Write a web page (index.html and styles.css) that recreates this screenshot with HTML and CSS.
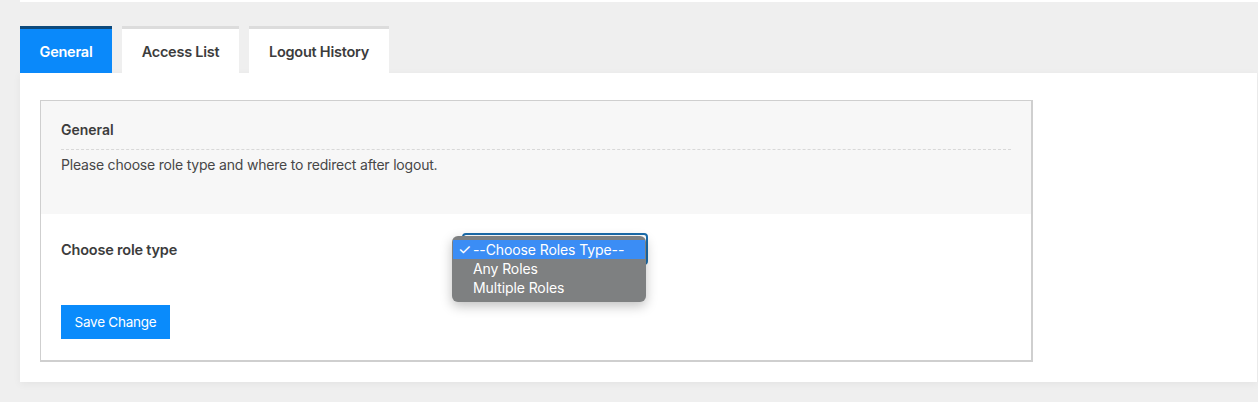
FILE: index.html
```html
<!DOCTYPE html>
<html>
<head>
<meta charset="utf-8">
<link rel="stylesheet" href="styles.css">
</head>
<body>
<div class="page">
  <div class="topstrip"></div>
  <div class="tabs">
    <div class="tab active">General</div>
    <div class="tab tab-access">Access List</div>
    <div class="tab tab-history">Logout History</div>
  </div>
  <div class="panel">
    <div class="box">
      <div class="box-head">
        <div class="box-title">General</div>
        <div class="box-desc">Please choose role type and where to redirect after logout.</div>
      </div>
      <div class="box-body">
        <div class="row">
          <div class="label">Choose role type</div>
          <div class="field">
            <div class="select"></div>
            <div class="menu">
              <div class="opt sel"><span class="check">✓</span>--Choose Roles Type--</div>
              <div class="opt">Any Roles</div>
              <div class="opt">Multiple Roles</div>
            </div>
          </div>
        </div>
        <button class="btn">Save Change</button>
      </div>
    </div>
  </div>
</div>
</body>
</html>
```
FILE: styles.css
```css
html, body { margin: 0; padding: 0; }
body {
  background: #efefef;
  font-family: Inter, "Noto Sans", "Liberation Sans", sans-serif;
  color: #3c3c3c;
  width: 1258px;
  height: 402px;
  overflow: hidden;
}
.page { padding-left: 20px; }
.topstrip { height: 2px; background: #fff; }
.tabs { display: flex; gap: 10px; margin-top: 24px; align-items: flex-end; }
.tab {
  height: 44px;
  border-top: 3px solid #dcdcdc;
  background: #fff;
  font-size: 14.5px;
  font-weight: 600;
  letter-spacing: -0.25px;
  color: #3c3c3c;
  display: flex;
  align-items: center;
  justify-content: center;
  box-sizing: content-box;
}
.tab.active { width: 92px; background: #0a89fa; color: #fff; border-top-color: #0d4a7c; }
.tab-access { width: 117px; }
.tab-history { width: 140px; }
.panel {
  width: 1197px;
  background: #fff;
  padding: 27px 20px 20px 20px;
  box-shadow: 0 2px 8px rgba(0,0,0,0.05);
}
.box {
  width: 990px;
  border-style: solid;
  border-width: 1px 2px 2px 1px;
  border-color: #cfcfcf;
}
.box-head {
  background: #f7f7f7;
  padding: 20px 20px 0 20px;
  height: 93px;
}
.box-title {
  font-size: 14px;
  font-weight: 600;
  line-height: 18px;
  padding-bottom: 10px;
  border-bottom: 1px dashed #d8d8d8;
}
.box-desc {
  font-size: 14px;
  letter-spacing: -0.2px;
  line-height: 18px;
  margin-top: 6px;
  color: #474747;
}
.box-body { padding: 26px 20px 21px 20px; }
.row { display: flex; align-items: flex-start; height: 65px; }
.label { width: 401px; font-size: 14.5px; font-weight: 600; letter-spacing: -0.2px; line-height: 18px; margin-top: 1px; }
.field { position: relative; }
.select {
  width: 182px;
  height: 28px;
  border: 2px solid #1b6cab;
  border-radius: 4px;
  margin-top: -7px;
  background: #fff;
}
.menu {
  position: absolute;
  left: -10px;
  top: -4px;
  width: 194px;
  padding: 4px 0 5px 0;
  background: #7e8081;
  border-radius: 6px;
  box-shadow: 0 4px 12px rgba(0,0,0,0.25);
  box-sizing: border-box;
}
.opt {
  height: 19px;
  line-height: 19px;
  font-size: 14px;
  letter-spacing: -0.1px;
  color: #fff;
  padding-left: 21px;
  position: relative;
  white-space: nowrap;
}
.opt.sel { background: #3b8df5; margin: 0 1px; padding-left: 20px; }
.check { position: absolute; left: 5px; top: 0; font-size: 15px; }
.btn {
  display: block;
  width: 109px;
  height: 34px;
  background: #0a8bfb;
  color: #fff;
  border: none;
  font-family: inherit;
  font-size: 13.5px;
  letter-spacing: -0.25px;
  padding: 0;
}
```
